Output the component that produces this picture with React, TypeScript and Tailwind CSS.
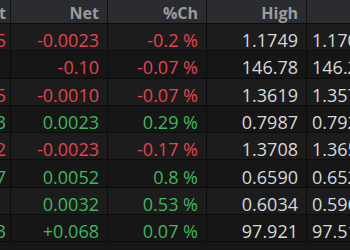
import React from 'react'

type Dir = 'up' | 'down' | 'flat'

interface Quote {
  last: string
  lastDir: Dir
  net: string
  pct: string
  high: string
  low: string
}

const quotes: Quote[] = [
  { last: '1.1725', lastDir: 'down', net: '-0.0023', pct: '-0.2 %', high: '1.1749', low: '1.1702' },
  { last: '', lastDir: 'flat', net: '-0.10', pct: '-0.07 %', high: '146.78', low: '146.21' },
  { last: '1.3585', lastDir: 'down', net: '-0.0010', pct: '-0.07 %', high: '1.3619', low: '1.3578' },
  { last: '0.7963', lastDir: 'up', net: '0.0023', pct: '0.29 %', high: '0.7987', low: '0.7921' },
  { last: '1.3682', lastDir: 'down', net: '-0.0023', pct: '-0.17 %', high: '1.3708', low: '1.3652' },
  { last: '0.6577', lastDir: 'up', net: '0.0052', pct: '0.8 %', high: '0.6590', low: '0.6521' },
  { last: '', lastDir: 'flat', net: '0.0032', pct: '0.53 %', high: '0.6034', low: '0.5962' },
  { last: '97.883', lastDir: 'up', net: '+0.068', pct: '0.07 %', high: '97.921', low: '97.512' },
]

const dirColor = (d: Dir) =>
  d === 'up' ? 'text-[#3fb75c]' : d === 'down' ? 'text-[#e3434f]' : 'text-[#d6d6d6]'

const signDir = (v: string): Dir => (v.startsWith('-') ? 'down' : 'up')

export default function App() {
  return (
    <div
      className="w-[350px] h-[250px] overflow-hidden bg-[#161616]"
      style={{ fontFamily: '"Open Sans", "Liberation Sans", sans-serif' }}
    >
      <div className="-ml-[79px] w-[600px]">
        {/* Header */}
        <div className="flex h-[24px] bg-[#2a2c30] border-b border-[#0c0c0c] text-[16px] font-bold text-[#9b9b9b] leading-none">
          <div className="w-[90px] flex items-center justify-end pt-[2px] pr-[4px] border-r border-[#111214]">Last</div>
          <div className="w-[97px] flex items-center justify-end pt-[2px] pr-[8px] border-r border-[#111214]">Net</div>
          <div className="w-[99px] flex items-center justify-end pt-[2px] pr-[8px] border-r border-[#111214]">%Ch</div>
          <div className="w-[100px] flex items-center justify-end pt-[2px] pr-[8px] border-r border-[#111214]">High</div>
          <div className="w-[110px] flex items-center justify-end pt-[2px] pr-[8px]">Low</div>
        </div>

        {/* Rows */}
        {quotes.map((q, i) => (
          <div
            key={i}
            className={`flex h-[27.3px] border-b border-[#0c0c0c] text-[18px] font-medium leading-none ${
              i % 2 === 0 ? 'bg-[#1c1c1c]' : 'bg-[#161616]'
            }`}
          >
            <div className={`w-[90px] flex items-center justify-end pt-[6px] pr-[4px] border-r border-[#0c0c0c] ${dirColor(q.lastDir)}`}>
              {q.last}
            </div>
            <div className={`w-[97px] flex items-center justify-end pt-[6px] pr-[8px] border-r border-[#0c0c0c] ${dirColor(signDir(q.net))}`}>
              {q.net}
            </div>
            <div className={`w-[99px] flex items-center justify-end pt-[6px] pr-[8px] border-r border-[#0c0c0c] ${dirColor(signDir(q.pct))}`}>
              {q.pct}
            </div>
            <div className="w-[100px] flex items-center justify-end pt-[6px] pr-[8px] border-r border-[#0c0c0c] text-[#d8d8d8]">
              {q.high}
            </div>
            <div className="w-[110px] flex items-center pt-[6px] pl-[5px] text-[#d8d8d8]">
              {q.low}
            </div>
          </div>
        ))}
      </div>
    </div>
  )
}
